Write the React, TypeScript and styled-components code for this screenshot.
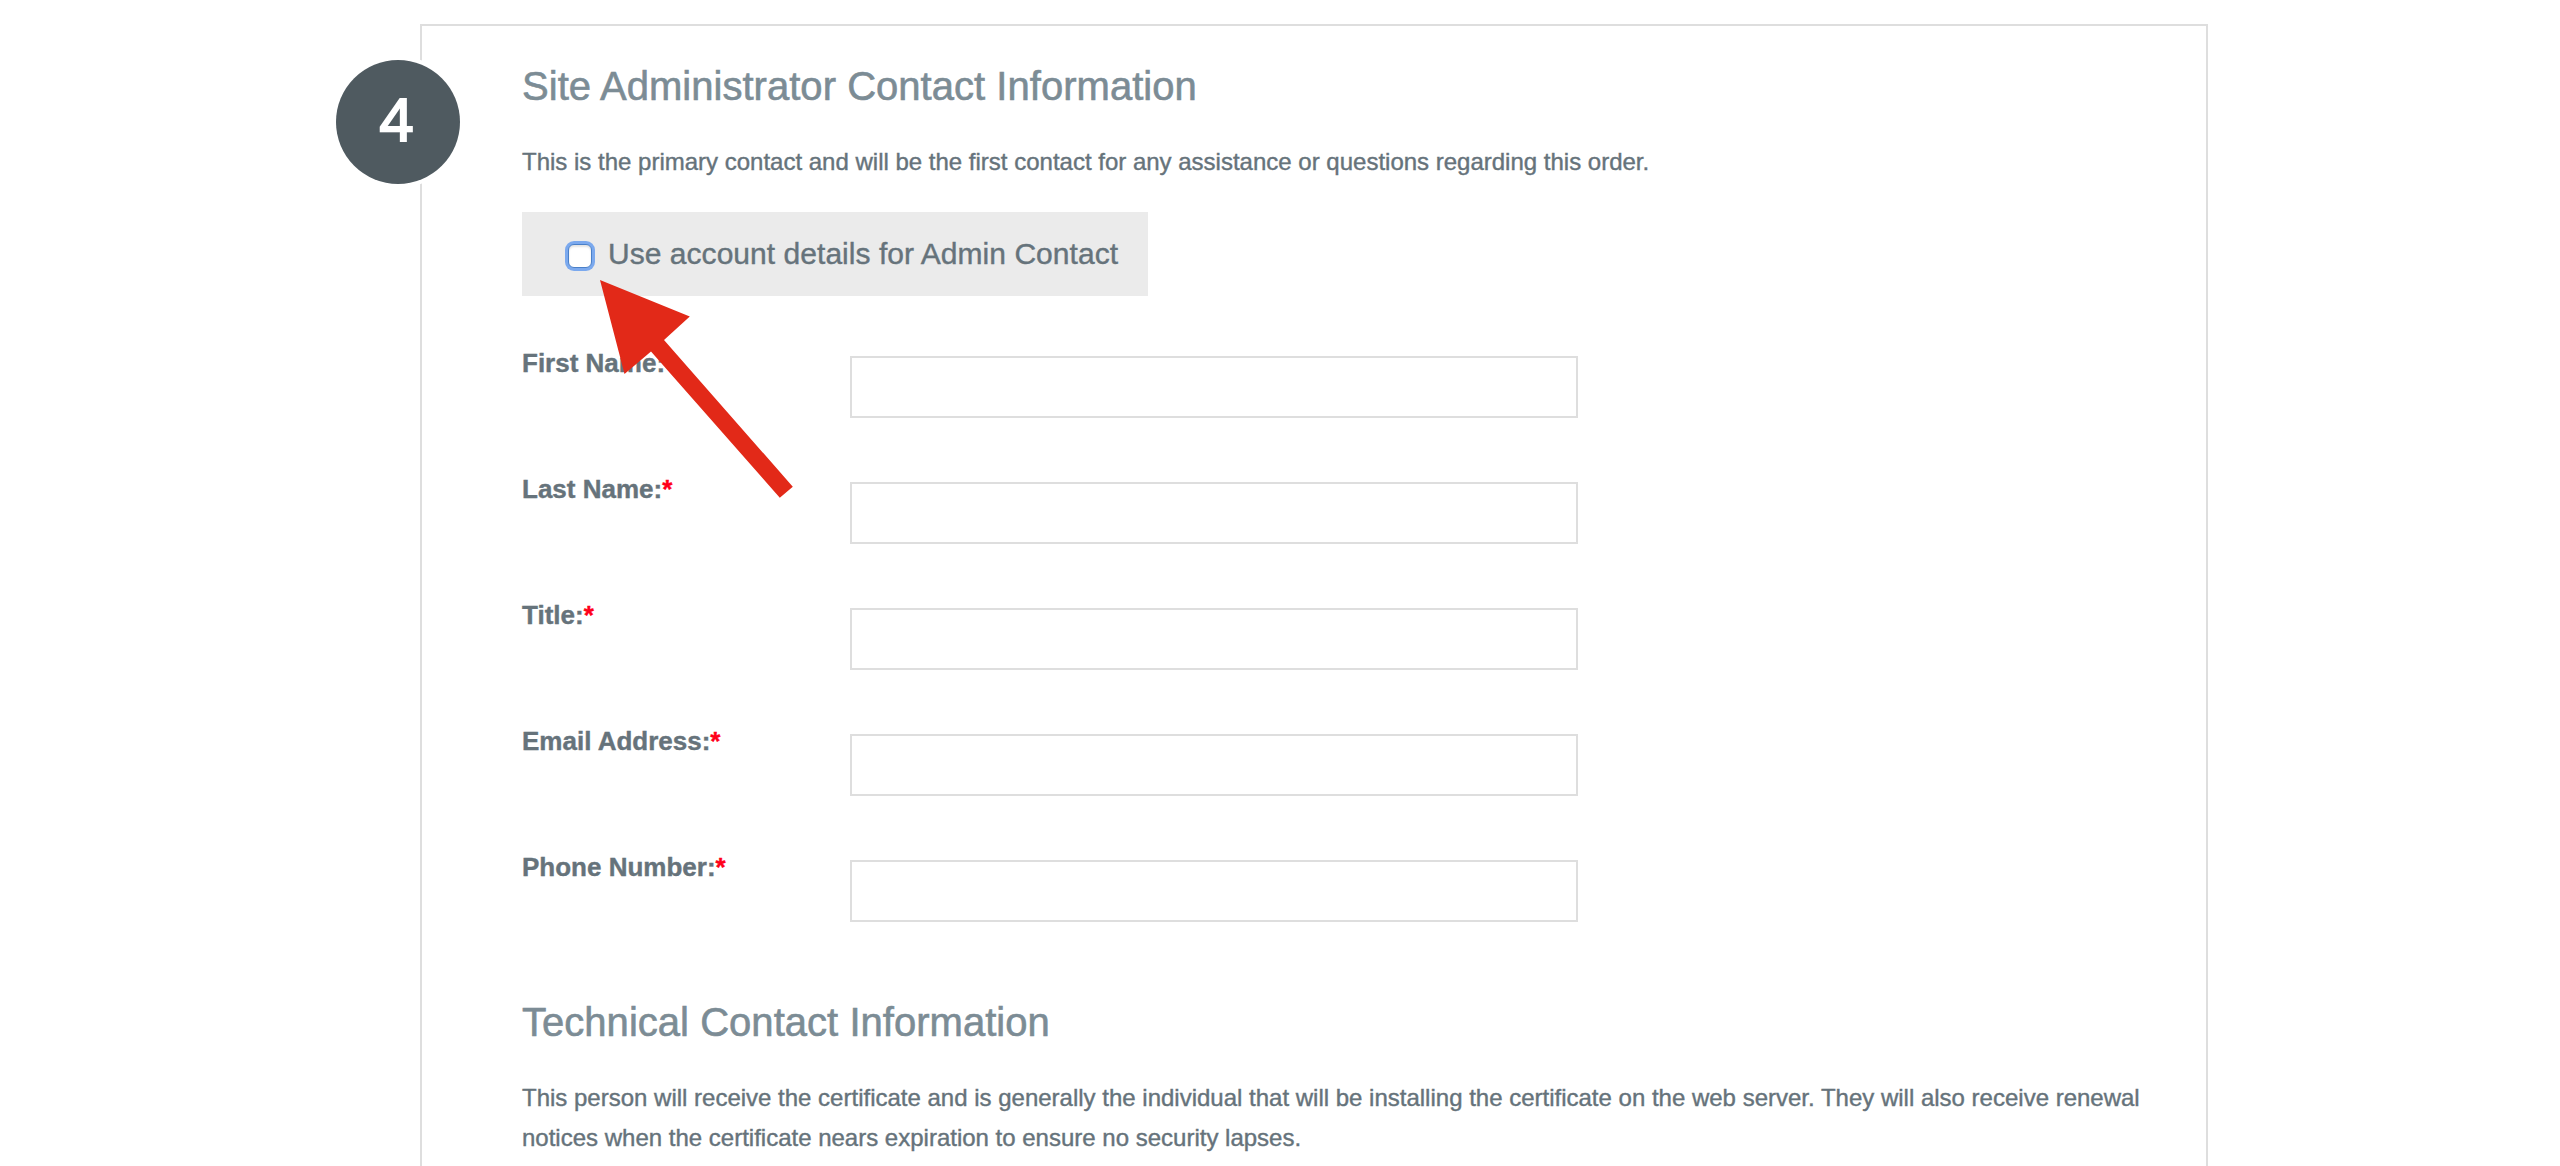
import React from "react";
import styled, { createGlobalStyle } from "styled-components";

const GlobalStyle = createGlobalStyle`
  * { box-sizing: border-box; }
  body {
    margin: 0;
    background: #fff;
    color: #66737b;
    font-family: "Liberation Sans", Arial, sans-serif;
    -webkit-text-stroke: 0.4px currentColor;
    overflow: hidden;
  }
`;

const Page = styled.main`
  height: 1166px;
  padding: 24px 352px 0 420px;
  overflow: hidden;
`;

const Panel = styled.section`
  position: relative;
  height: 1400px;
  border: 2px solid #dedede;
  padding: 38px 60px 0 100px;
`;

const StepBadge = styled.div`
  position: absolute;
  left: -86px;
  top: 34px;
  width: 124px;
  height: 124px;
  padding: 0 3px 4px 0;
  border-radius: 50%;
  background: #4f5a60;
  box-shadow: 0 0 0 4px #fff;
  color: #fff;
  font-size: 62px;
  line-height: 120px;
  text-align: center;
  -webkit-text-stroke: 1.8px #fff;
`;

const Heading = styled.h2`
  margin: 0;
  color: #7c8c95;
  font-size: 40px;
  font-weight: 400;
  line-height: 44px;
  letter-spacing: 0.03px;
  -webkit-text-stroke: 0.6px currentColor;
`;

const Text = styled.p`
  margin: 34px 0 0;
  font-size: 24px;
  line-height: 40px;
`;

const AccountOption = styled.label`
  display: flex;
  align-items: center;
  width: 626px;
  height: 84px;
  margin-top: 30px;
  padding-left: 46px;
  background: #ebebeb;
  font-size: 30px;
  line-height: 34px;
  letter-spacing: 0.04px;
`;

const Checkbox = styled.input`
  appearance: none;
  width: 24px;
  height: 24px;
  margin: 4px 16px 0 0;
  border: 1px solid #4a80c8;
  border-radius: 6px;
  background: #fff;
  box-shadow: 0 0 0 3px #7ba9ee, inset 0 2px 2px #e4e4e4;
`;

const Fields = styled.div`
  display: flex;
  flex-direction: column;
  gap: 64px;
  margin: 60px 0 78px;
`;

const Field = styled.div`
  display: grid;
  grid-template-columns: 328px 728px;
  height: 62px;
`;

const FieldLabel = styled.label`
  margin-top: -8px;
  font-size: 26px;
  font-weight: 700;
  line-height: 30px;
`;

const Required = styled.span`
  color: #ff0019;
`;

const FieldInput = styled.input`
  width: 728px;
  height: 62px;
  border: 2px solid #dedede;
  background: #fff;
  padding: 0 16px;
  font: inherit;
  outline: none;
`;

const Arrow = styled.svg`
  position: absolute;
  left: 178px;
  top: 254px;
`;

const FIELDS = ["First Name", "Last Name", "Title", "Email Address", "Phone Number"];

export default function App() {
  return (
    <>
      <GlobalStyle />
      <Page>
        <Panel>
          <StepBadge>4</StepBadge>
          <Heading>Site Administrator Contact Information</Heading>
          <Text>
            This is the primary contact and will be the first contact for any assistance or questions regarding this order.
          </Text>
          <AccountOption>
            <Checkbox type="checkbox" />
            Use account details for Admin Contact
          </AccountOption>
          <Fields>
            {FIELDS.map((name) => (
              <Field key={name}>
                <FieldLabel htmlFor={name}>
                  {name}:<Required>*</Required>
                </FieldLabel>
                <FieldInput id={name} type="text" />
              </Field>
            ))}
          </Fields>
          <Heading>Technical Contact Information</Heading>
          <Text>
            This person will receive the certificate and is generally the individual that will be installing the certificate on the web server. They will also receive renewal notices when the certificate nears expiration to ensure no security lapses.
          </Text>
          <Arrow width="194" height="220" viewBox="0 0 194 220" aria-hidden="true">
            <path d="M0 0L89.8 36.5L64 60L192.8 206.7L179.8 217.8L51 71.5L24.5 94Z" fill="#e22918" />
          </Arrow>
        </Panel>
      </Page>
    </>
  );
}
